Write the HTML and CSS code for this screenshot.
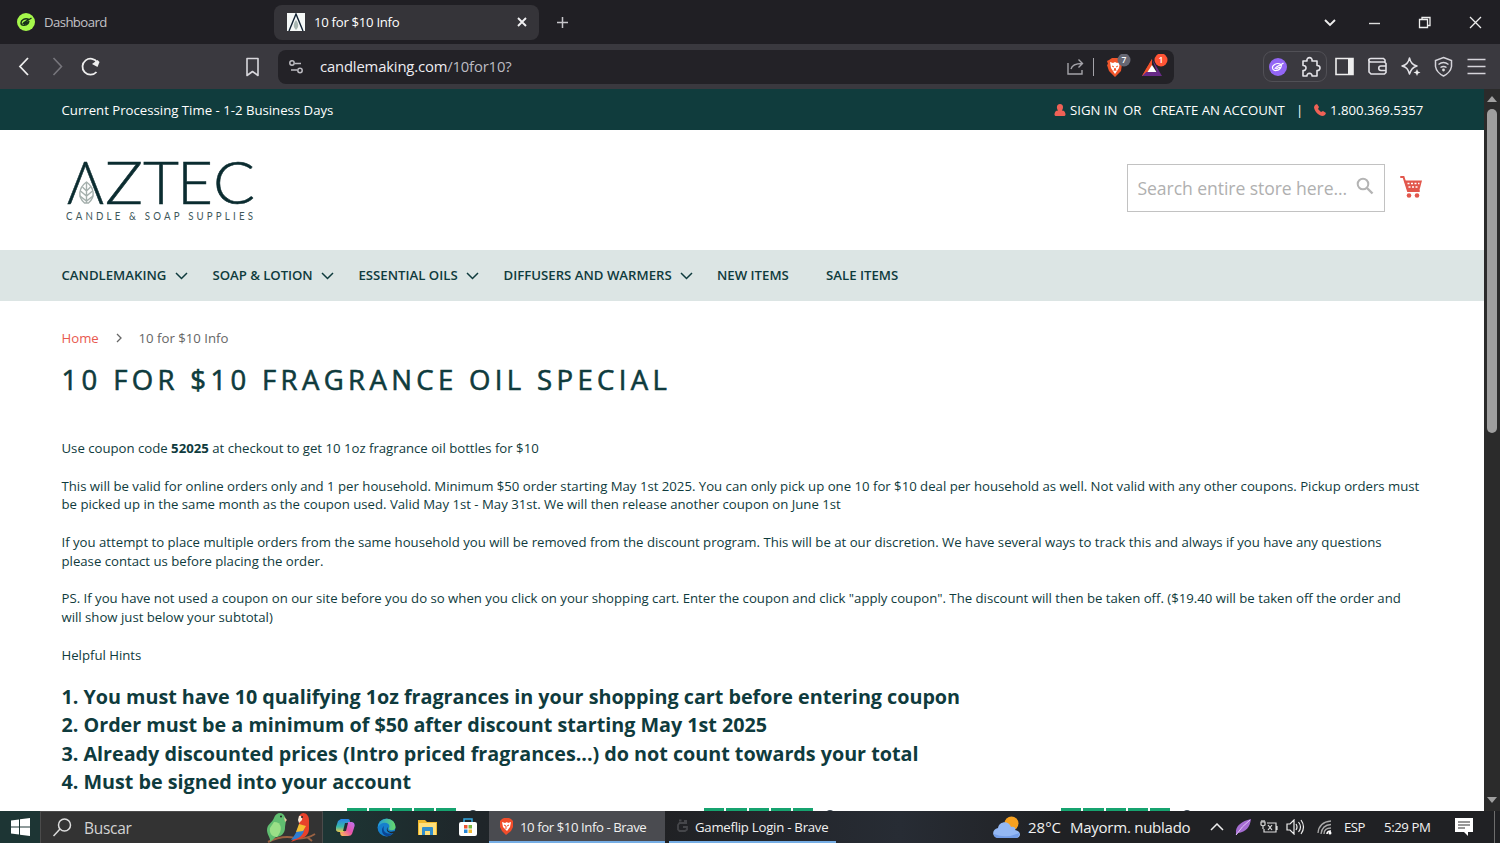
FILE: index.html
```html
<!DOCTYPE html>
<html lang="en">

<head>
  <meta charset="UTF-8" />
  <meta name="viewport" content="width=device-width, initial-scale=1.0" />
  <title>10 for $10 Info</title>
  <link rel="stylesheet" href="styles.css">
</head>

<body>

  <!-- browser tabs -->
  <div class="tabs">
    <div class="tab">
      <svg width="18" height="18" viewBox="0 0 18 18"><circle cx="9" cy="9" r="9" fill="#a5f84b"/><path d="M12 6.500C8 4.500 4 7 4 10c0 3 5 3 7 .5L12 8M6 11c0-2 4-3 8.500-6M7 11l4-2" fill="none" stroke="#18301a" stroke-width="1.500"/></svg>
      <span class="tab-off">Dashboard</span>
    </div>
    <div class="tab tab-active">
      <svg width="18" height="18" viewBox="0 0 18 18"><path d="M0 0h18v18H0z" fill="#f5f8f7"/><path d="M2 18 9 1l7 17" fill="none" stroke="#123" stroke-width="1.400"/><path d="M9 7c-3 4-3 7 0 10 3-3 3-6 0-10z" fill="#a9b7b3"/></svg>
      <span class="tab-on">10 for $10 Info</span>
      <svg class="tab-x" width="10" height="10" viewBox="0 0 10 10"><path d="m1 1 8 8m0-8L1 9" stroke="#f1f1f3" stroke-width="1.900"/></svg>
    </div>
    <svg class="new-tab" width="13" height="13" viewBox="0 0 13 13"><path d="M6.500 1v11M1 6.500h11" stroke="#c6c5ca" stroke-width="1.500"/></svg>
    <div class="window-buttons">
      <svg class="tab-search" width="50" height="24" viewBox="0 0 50 24"><path d="m20 10 5 5 5-5" fill="none" stroke="#eee" stroke-width="1.900"/></svg>
      <svg width="50" height="24" viewBox="0 0 50 24"><path d="M19 13.500h11" stroke="#ddd" stroke-width="1.400"/></svg>
      <svg width="50" height="24" viewBox="0 0 50 24"><path d="M19.500 9.500h8v8h-8zM22 9V7.500h8v8h-2" fill="none" stroke="#eee" stroke-width="1.300"/></svg>
      <svg width="50" height="24" viewBox="0 0 50 24"><path d="m20 7 11 11m0-11L20 18" stroke="#eee" stroke-width="1.300"/></svg>
    </div>
  </div>

  <!-- address bar -->
  <div class="toolbar">
    <svg class="tool" viewBox="0 0 33 33"><path d="m20 8-8 8.500 8 8.500" fill="none" stroke="#eee" stroke-width="1.800"/></svg>
    <svg class="tool" viewBox="0 0 33 33"><path d="m12.500 8 8 8.500-8 8.500" fill="none" stroke="#77767c" stroke-width="1.600"/></svg>
    <svg class="tool" viewBox="0 0 33 33"><path d="M22.500 22a8 8 0 1 1 .8-9.500" fill="none" stroke="#eee" stroke-width="1.800"/><path d="m18 14 5.500 3 2-5-2-2z" fill="#eee"/></svg>
    <svg class="tool bookmark" viewBox="0 0 33 33"><path d="M11 8.500h11v17l-5.500-4-5.500 4z" fill="none" stroke="#d8d7dc" stroke-width="1.600" stroke-linejoin="round"/></svg>
    <div class="address">
      <svg class="tune" width="16" height="16" viewBox="0 0 16 16"><g fill="none" stroke="#bcbbc1" stroke-width="1.500"><circle cx="4" cy="4" r="2.200"/><circle cx="12" cy="11.500" r="2.200"/><path d="M7 4.500h6M3 11h6"/></g></svg>
      <span class="url">candlemaking.com<i>/10for10?</i></span>
      <svg class="share" width="19" height="18" viewBox="0 0 19 18"><path d="M2 5v11h14v-4M5 11c1-4 4-5.500 11-5.500M12.500 1.500l4 4-4 4" fill="none" stroke="#a4a3a9" stroke-width="1.400"/></svg>
      <span class="divider"></span>
      <svg class="shield" width="26" height="26" viewBox="0 0 26 26"><path d="m4 6 3-2h6l3 3 1 3-1 7-6 6-6-6L2 11l1-1-1-3z" fill="#f1562b"/><path d="m5 8 3 1 2-1 2 1 3-1-1 6-4 6-4-6z" fill="#fff"/><path d="m7 12 2 1m4-1-2 1m-2 4 1-3 1 3" stroke="#f1562b" fill="none"/><circle cx="19" cy="6" r="6.500" fill="#666773"/><text class="badge" x="19" y="9" text-anchor="middle">7</text></svg>
      <svg width="27" height="26" viewBox="0 0 27 26"><path d="M10 5 0 22h10V14z" fill="#f0522c"/><path d="m10 5 10 17H0l4-4h11z" fill="#682a88"/><path d="M10 5v6l-6 7-4 4z" fill="#f0522c"/><path d="m10 11 4.500 7h-9z" fill="#fff"/><circle cx="19" cy="6" r="6.500" fill="#ff5435"/><text class="badge" x="19" y="9" text-anchor="middle">1</text></svg>
    </div>
    <div class="extensions">
      <svg width="20" height="20" viewBox="0 0 20 20"><circle cx="10" cy="10" r="9" fill="#9366f5"/><path d="M13 7.500C9 5 4 8 4.500 11c.5 4 7 3 8.500-1l.5-2M7 12c0-2 4-3 8.500-6M8 12l4-2" fill="none" stroke="#fff" stroke-width="1.200"/></svg>
      <svg width="22" height="22" viewBox="0 0 22 22"><path d="M4 5h4C7 .500 14 .500 13 5h5v4.500c4-.500 4 5.500 0 5V20h-5c.500-3.500-5.500-3.500-5 0H4v-5.500c4 .500 4-5.500 0-5z" fill="none" stroke="#e5e4e9" stroke-width="1.600" stroke-linejoin="round"/></svg>
    </div>
    <svg class="tool" viewBox="0 0 33 33"><path d="M8 8.500h17v16H8z" fill="none" stroke="#eee" stroke-width="1.600"/><path d="M20 8.500h5v16h-5z" fill="#eee"/></svg>
    <svg class="tool" viewBox="0 0 33 33"><path d="M24 12v-2l-1.500-1.500H10C7 8.500 7 12 10 12h13.500l1.500 1.500v9L23.500 24H10l-2-2V10M25 16h-5c-3 0-3 4.500 0 4.500h5" fill="none" stroke="#e2e1e6" stroke-width="1.600"/></svg>
    <svg class="tool" viewBox="0 0 33 33"><path d="M15.500 8c1 5 3 7 7.500 8-4 1-6 3-7.500 8-1.500-5-3-7-7.500-8 4.500-1 6.500-3 7.500-8z" fill="none" stroke="#e2e1e6" stroke-width="1.500" stroke-linejoin="round"/><path d="m23 19 1 2.500 2.500 1-2.500 1-1 2.500-1-2.500-2.500-1 2.500-1z" fill="#eee"/></svg>
    <svg class="tool" viewBox="0 0 33 33"><g fill="none" stroke="#d5d4da" stroke-width="1.500"><path d="m16.500 7.500 8 3v6q-1 6-8 9.500-7-3.500-8-9.500v-6z"/><path d="M11.500 14.500q5-4 10 0M13.500 17.500q3-2 6 0"/></g><circle cx="16.500" cy="20" r="1.400" fill="#ddd"/></svg>
    <svg class="tool" viewBox="0 0 33 33"><path d="M7.500 9.500h18M7.500 16.500h18M7.500 23.500h18" stroke="#d5d4da" stroke-width="1.600"/></svg>
  </div>

  <div class="viewport">
    <div class="page">

      <div class="topbar">
        <span class="processing">Current Processing Time - 1-2 Business Days</span>
        <svg class="user" width="12" height="12" viewBox="0 0 12 13"><path d="M6 0c4 0 4 5 2 7 3 0 4 2 4 5l-1 1H1l-1-1c0-3 1-5 4-5C2 5 2 0 6 0z" fill="#ef6156"/></svg>
        <span class="signin">SIGN IN</span>
        <span class="or">OR</span>
        <span class="create">CREATE AN ACCOUNT</span>
        <span class="bar">|</span>
        <svg class="phone" width="12" height="12" viewBox="0 0 12 12"><path d="M1 1 3 0l2 3-1 2 3 3 2-1 3 2-1 2-2 1C4 12 0 6 0 3z" fill="#ef6156"/></svg>
        <span class="number">1.800.369.5357</span>
      </div>

      <header class="header">
        <svg class="logo" width="190" height="86" viewBox="0 -14 190 86">
          <g class="logo-name">
            <text x="1" y="46" textLength="37" lengthAdjust="spacingAndGlyphs">Λ</text>
            <text x="39" y="46" textLength="38" lengthAdjust="spacingAndGlyphs">Z</text>
            <text x="77" y="46" textLength="36" lengthAdjust="spacingAndGlyphs">T</text>
            <text x="111" y="46" textLength="36" lengthAdjust="spacingAndGlyphs">E</text>
            <text x="147" y="46" textLength="42" lengthAdjust="spacingAndGlyphs">C</text>
          </g>
          <g fill="none" stroke="#a5b0ad" stroke-width="1.400"><path d="M20.500 24c-8 6-9 15-2 21h4c7-6 6-15-2-21z"/><path d="M20.500 25v20M16.500 29l4 4 4-4M14.500 33l6 5 6-5M14 38l6.500 5 6.500-5"/></g>
          <text class="logo-tag" x="0" y="62.500" textLength="228" transform="scale(.82 1)">CANDLE &amp; SOAP SUPPLIES</text>
        </svg>
        <div class="search">
          <span class="placeholder">Search entire store here...</span>
          <svg width="18" height="18" viewBox="0 0 18 18"><circle cx="7" cy="7" r="5.300" fill="none" stroke="#b4b4b4" stroke-width="2"/><path d="m11 11 5.500 5.500" stroke="#b4b4b4" stroke-width="2.400"/></svg>
        </div>
        <svg class="cart" width="22" height="24" viewBox="0 0 22 24"><path d="M1 2h2.500l4.500 14h11" fill="none" stroke="#e2574c" stroke-width="2" stroke-linecap="round"/><path d="M4 5.500h18L19.500 15H7.500z" fill="#e2574c"/><path d="M7.500 8.500h12M8.500 12h10" stroke="#fff" stroke-width="1.600" stroke-dasharray="2 1.500"/><circle cx="9" cy="20.500" r="2.300" fill="#e2574c"/><circle cx="17" cy="20.500" r="2.300" fill="#e2574c"/></svg>
      </header>

      <nav class="nav">
        <a class="nav-candle">CANDLEMAKING <svg viewBox="0 0 13 8"><path d="m1 1 5.500 5.500L12 1"/></svg></a>
        <a class="nav-soap">SOAP &amp; LOTION <svg viewBox="0 0 13 8"><path d="m1 1 5.500 5.500L12 1"/></svg></a>
        <a class="nav-oils">ESSENTIAL OILS <svg viewBox="0 0 13 8"><path d="m1 1 5.500 5.500L12 1"/></svg></a>
        <a class="nav-diffusers">DIFFUSERS AND WARMERS <svg viewBox="0 0 13 8"><path d="m1 1 5.500 5.500L12 1"/></svg></a>
        <a class="nav-new">NEW ITEMS</a>
        <a>SALE ITEMS</a>
      </nav>

      <main class="content">
        <div class="breadcrumbs">
          <a>Home</a>
          <svg width="6" height="10" viewBox="0 0 6 10"><path d="m1 1 4 4-4 4" fill="none" stroke="#666" stroke-width="1.300"/></svg>
          <span>10 for $10 Info</span>
        </div>
        <h1>10 FOR $10 FRAGRANCE OIL SPECIAL</h1>
        <p>Use coupon code <b>52025</b> at checkout to get 10 1oz fragrance oil bottles for $10</p>
        <p>This will be valid for online orders only and 1 per household. Minimum $50 order starting May 1st 2025. You can only pick up one 10 for $10 deal per household as well. Not valid with any other coupons. Pickup orders must<br>be picked up in the same month as the coupon used. Valid May 1st - May 31st. We will then release another coupon on June 1st</p>
        <p>If you attempt to place multiple orders from the same household you will be removed from the discount program. This will be at our discretion. We have several ways to track this and always if you have any questions<br>please contact us before placing the order.</p>
        <p>PS. If you have not used a coupon on our site before you do so when you click on your shopping cart. Enter the coupon and click "apply coupon". The discount will then be taken off. ($19.40 will be taken off the order and<br>will show just below your subtotal)</p>
        <p>Helpful Hints</p>
        <div class="hints">
          <div>1. You must have 10 qualifying 1oz fragrances in your shopping cart before entering coupon</div>
          <div>2. Order must be a minimum of $50 after discount starting May 1st 2025</div>
          <div>3. Already discounted prices (Intro priced fragrances...) do not count towards your total</div>
          <div>4. Must be signed into your account</div>
        </div>
        <div class="ratings">
          <div class="stars"><i></i><i></i><i></i><i></i><i></i><b></b></div>
          <div class="stars"><i></i><i></i><i></i><i></i><i></i><b></b></div>
          <div class="stars"><i></i><i></i><i></i><i></i><i></i><b></b></div>
        </div>
      </main>
    </div>

    <div class="scrollbar">
      <svg width="10" height="6" viewBox="0 0 10 6"><path d="m5 0 5 6H0z" fill="#a0a0a0"/></svg>
      <div class="thumb"></div>
      <svg class="down" width="10" height="6" viewBox="0 0 10 6"><path d="M0 0h10L5 6z" fill="#a0a0a0"/></svg>
    </div>
  </div>

  <!-- windows taskbar -->
  <div class="taskbar">
    <div class="start"><svg width="19" height="18" viewBox="0 0 19 18"><path d="m0 2.500 8-1v7H0zM9 1.300 19 0v8.500H9zM0 9.500h8v7l-8-1zM9 9.500h10V18L9 16.700z" fill="#fff"/></svg></div>
    <div class="find">
      <svg width="19" height="19" viewBox="0 0 19 19"><circle cx="11.500" cy="7" r="6" fill="none" stroke="#ddd" stroke-width="1.500"/><path d="m7 11-6.500 7" stroke="#ddd" stroke-width="1.500"/></svg>
      <span>Buscar</span>
      <svg class="parrots" width="52" height="31" viewBox="0 0 52 31"><path d="M3 30q14-7 27-4 10 2 20-4M42 25l5 4" fill="none" stroke="#9b6243" stroke-width="2"/><path d="M9 6c2-6 9-7 11-1 2 3 0 7 0 11 0 5-4 9-9 9l-6 5c1-4-3-7-3-12C2 12 7 11 9 6z" fill="#60bd70"/><path d="M9 10c8 0 9 8 3 15-5 0-8-4-7-9z" fill="#9adf87"/><path d="m19 5 3 3-2 2z" fill="#e5c6a0"/><circle cx="16" cy="4.500" r="1" fill="#222"/><path d="M34 5c2-7 10-4 10 3v9c0 6-5 9-10 10l-8 3c4-4 5-9 8-14z" fill="#e8412a"/><path d="M34 13c-2 6-4 10-8 15 8-1 13-5 13-11z" fill="#2f7cd0"/><path d="m34 12-3 8 7-1 3-5z" fill="#f4be31"/><path d="M34 4q4-1 3 4l-3 3-1-3z" fill="#f8e8d7"/><circle cx="37" cy="5" r="1" fill="#222"/></svg>
    </div>
    <div class="pinned">
      <svg width="19" height="18" viewBox="0 0 19 18"><defs><linearGradient id="cop" x1="0" y1="1" x2="1" y2="0"><stop stop-color="#ffc64b"/><stop offset=".5" stop-color="#e852aa"/><stop offset="1" stop-color="#ba75f5"/></linearGradient><linearGradient id="cop2" x2="0" y2="1"><stop stop-color="#2882ea"/><stop offset=".6" stop-color="#39bba8"/><stop offset="1" stop-color="#f1c94c"/></linearGradient></defs><path d="M5 1h7q2 0 2 3l-3 1-3 9H3q-4 0-3-5l2-6z" fill="url(#cop2)"/><path d="M12 4h4q4 1 2 6l-2 6q-1 2-4 2H6q-2-1-2-4h4z" fill="url(#cop)"/><path d="M9 5h3l-2 8H7z" fill="#203033"/></svg>
      <svg width="19" height="19" viewBox="0 0 19 19"><defs><linearGradient id="edge"><stop stop-color="#229bdc"/><stop offset="1" stop-color="#68da68"/></linearGradient></defs><circle cx="9.500" cy="9.500" r="9" fill="#167fcd"/><path d="M1 9C2-2 18-2 18.500 9c0 4-5 4-7 2 4-7-7-9-10.500-2z" fill="url(#edge)"/><path d="M7 8c-2 6 3 9 9 7-3 5-11 4-11-3 0-2 1-3 2-4z" fill="#0b4594"/><path d="M11 9c-2 4 2 6 7 4l-1 2c-6 1-9-3-6-6z" fill="#20272c"/></svg>
      <svg width="19" height="17" viewBox="0 0 19 17"><path d="M0 1h7l2 2h10v13H0z" fill="#f0b92d"/><path d="M1 4h17v12H1z" fill="#ffe07b"/><path d="M4 16V9q0-1 1-1h9q1 0 1 1v7h-3v-4H7v4z" fill="#318ecc"/></svg>
      <svg width="18" height="18" viewBox="0 0 18 18"><path d="M5 5V1h8v4" fill="none" stroke="#35a9e2" stroke-width="1.500"/><rect x="0" y="4" width="18" height="14" rx="2" fill="#fff"/><path d="M5 7h3.500v3.500H5z" fill="#ee5532"/><path d="M9.500 7H13v3.500H9.500z" fill="#78b840"/><path d="M5 11.500h3.500V15H5z" fill="#2686d8"/><path d="M9.500 11.500H13V15H9.500z" fill="#f2b82f"/></svg>
    </div>
    <div class="task task-active">
      <svg width="15" height="17" viewBox="0 0 15 17"><path d="m3 1 2-1h5l2 1 2 2v6l-2 4-5 4-4-4-2-4V3z" fill="#f14d2b"/><path d="m3 4 3 1 2-1 1 1 3-1-1 5-3 4-4-4z" fill="#fff"/><path d="m5 7 2 1m3-1L8 8m-1 3V8" stroke="#f14d2b" fill="none"/></svg>
      <span class="task-info">10 for $10 Info - Brave</span>
    </div>
    <div class="task task-login">
      <svg width="13" height="14" viewBox="0 0 13 14"><path d="M11 4H3.500L2 6v4.500L3.500 12H9l2-1.500V8H7M3 1.500h2.500M8 2h3" fill="none" stroke="#45464a" stroke-width="1.800"/></svg>
      <span class="task-game">Gameflip Login - Brave</span>
    </div>
    <div class="tray">
      <svg class="weather" width="27" height="23" viewBox="0 0 27 23"><circle cx="18.500" cy="7.500" r="7" fill="#f7a120"/><path d="M5 22C-2 21-1 13 5 12c1-7 11-8 13-1 4-1 5 2 4 3 7 1 6 8 1 8z" fill="#94b8f4"/><path d="M1 18q12 5 25-1 0 5-4 5H5q-4 0-4-4z" fill="#749ee8"/></svg>
      <span class="temp">28°C</span>
      <span class="forecast">Mayorm. nublado</span>
      <svg class="chevron" width="14" height="8" viewBox="0 0 14 8"><path d="m1 7 6-6 6 6" fill="none" stroke="#eee" stroke-width="1.500"/></svg>
      <svg class="feather" width="17" height="18" viewBox="0 0 17 18"><path d="M1 15C0 8 7 3 16 1c-1 8-5 13-13 14l-2 2z" fill="#a66dd2"/><path d="M1 17Q7 8 15 2" fill="none" stroke="#e1c4f5"/></svg>
      <svg class="battery" width="18" height="14" viewBox="0 0 18 14"><path d="M1 2v3l2 1 2-1V2zM2 0v2M4 0v2M3 6v3M7 3h9v9H4V9M17 6v4" fill="none" stroke="#ddd" stroke-width="1.200"/><path d="m8 5 4 5m0-5-4 5" stroke="#ddd" stroke-width="1.200"/></svg>
      <svg class="volume" width="19" height="16" viewBox="0 0 19 16"><path d="M1 5h3l4-4v14l-4-4H1zM10 5q2 3 0 6M12.500 3q4 5 0 10M15 1q5 7 0 14" fill="none" stroke="#eee" stroke-width="1.200"/></svg>
      <svg class="wifi" width="15" height="15" viewBox="0 0 15 15"><path d="M1 13Q2 2 14 1M4 14Q5 5 14 4.500M7 14q0-6 7-6" fill="none" stroke="#aaa" stroke-width="1.300"/><path d="M10 14q0-3 4-3" fill="none" stroke="#fff" stroke-width="1.600"/><circle cx="13" cy="13" r="1.500" fill="#fff"/></svg>
      <span class="lang">ESP</span>
      <span class="clock">5:29 PM</span>
      <svg class="notice" width="18" height="18" viewBox="0 0 18 18"><path d="M0 0h18v14h-5v4l-4-4H0z" fill="#fff"/><path d="M3 4h12M3 7h12M3 10h7" stroke="#333" stroke-width="1.200"/></svg>
      <span class="desktop"></span>
    </div>
  </div>

</body>
</html>
```

FILE: styles.css
```css
* {
  box-sizing: border-box;
}

body {
  margin: 0;
  width: 1500px;
  height: 843px;
  overflow: hidden;
  display: flex;
  flex-direction: column;
  font-family: "Open Sans", sans-serif;
  font-size: 13.2px;
  color: #0f3b3d;
  background: #fff;
}

svg {
  display: block;
  flex: none;
}

span, a {
  white-space: nowrap;
  flex: none;
}

/* tabs */

.tabs {
  height: 44px;
  flex: none;
  display: flex;
  align-items: center;
  background: #201f24;
  color: #fff;
}

.tab {
  display: flex;
  align-items: center;
  width: 265px;
  height: 35px;
  padding-left: 17px;
  gap: 9px;
  color: #c3c2c7;
  letter-spacing: -0.3px;
}

.tab-off {
  letter-spacing: -0.6px;
}

.tab-active {
  margin-left: 9px;
  padding: 0 12px 0 13px;
  border-radius: 8px;
  background: #353439;
  color: #fff;
}

.tab-x {
  margin-left: auto;
}

.new-tab {
  margin-left: 17px;
}

.window-buttons {
  display: flex;
  margin-left: auto;
}

.tab-search {
  margin-right: -5px;
}

/* toolbar */

.toolbar {
  height: 45px;
  flex: none;
  display: flex;
  align-items: center;
  padding-left: 8px;
  background: #3a393f;
}

.tool {
  width: 33px;
  height: 33px;
}

.bookmark {
  margin-left: 129px;
}

.address {
  display: flex;
  align-items: center;
  width: 896px;
  height: 34px;
  margin-left: 9px;
  padding-left: 10px;
  border-radius: 8px;
  background: #232227;
  color: #eeedf2;
}

.url {
  width: 730px;
  margin-left: 16px;
  padding-bottom: 2px;
  font-size: 14.8px;
  letter-spacing: -0.15px;
}

.url i {
  font-style: normal;
  color: #bdbcc3;
}

.share {
  margin-left: 16px;
}

.divider {
  width: 1px;
  height: 18px;
  margin: 0 11px 0 8px;
  background: #a4a3a9;
}

.shield {
  margin-right: 11px;
}

.badge {
  font-size: 8.5px;
  font-weight: 600;
  fill: #fff;
}

.extensions {
  display: flex;
  align-items: center;
  justify-content: space-between;
  width: 64px;
  height: 31px;
  margin-left: 89px;
  padding: 0 5px 0 4px;
  border: 1px solid #515056;
  border-radius: 9px;
}

.extensions + .tool {
  margin-left: 1px;
}

/* store page */

.viewport {
  height: 722px;
  flex: none;
  display: flex;
}

.page {
  width: 1484px;
  height: 722px;
  overflow: hidden;
  background: #fff;
}

.topbar {
  display: flex;
  align-items: center;
  height: 41px;
  padding-left: 61.5px;
  background: #103c3d;
  color: #fff;
}

.processing {
  width: 992.5px;
}

.signin {
  width: 53px;
  margin-left: 4px;
}

.or {
  width: 29px;
}

.create {
  width: 144px;
  letter-spacing: -0.06px;
}

.bar {
  width: 18px;
}

.number {
  margin-left: 4px;
}

.header {
  display: flex;
  align-items: center;
  height: 120px;
  padding-left: 66px;
}

.logo {
  margin-top: -7px;
}

.logo-name {
  font-family: Lato, sans-serif;
  font-weight: 300;
  font-size: 59px;
  fill: #0b2c30;
  stroke: #0b2c30;
  stroke-width: 0.5;
}

.logo-tag {
  font-family: Lato, sans-serif;
  font-size: 11.8px;
  fill: #40575a;
}

.search {
  display: flex;
  align-items: center;
  width: 258px;
  height: 48px;
  margin: -4px 0 0 871px;
  padding-left: 9.5px;
  border: 1px solid #c2c2c2;
}

.search svg {
  margin: -4px 0 0 -1px;
}

.placeholder {
  width: 219px;
  font-size: 17.6px;
  letter-spacing: -0.08px;
  color: #b0b0b0;
}

.cart {
  margin: -6px 0 0 15px;
}

.nav {
  display: flex;
  align-items: center;
  height: 51px;
  padding: 0 0 2px 61.5px;
  background: #dce5e4;
  font-weight: 600;
}

.nav a {
  display: flex;
  align-items: center;
  justify-content: space-between;
}

.nav svg {
  width: 13px;
  height: 8px;
  margin-top: 2px;
  fill: none;
  stroke: #0f3b3d;
  stroke-width: 1.5;
}

.nav-candle {
  width: 126.5px;
  margin-right: 24.5px;
}

.nav-soap {
  width: 121.5px;
  margin-right: 24.5px;
  letter-spacing: -0.05px;
}

.nav-oils {
  width: 120.5px;
  margin-right: 24.5px;
}

.nav-diffusers {
  width: 189.5px;
  margin-right: 24px;
}

.nav-new {
  width: 109px;
}

.content {
  padding: 27px 0 0 61.5px;
}

.breadcrumbs {
  display: flex;
  align-items: center;
  height: 20px;
  color: #666;
}

.breadcrumbs a {
  width: 54px;
  color: #e8594f;
}

.breadcrumbs svg {
  margin-right: 17px;
}

h1 {
  margin: 12px 0 39px;
  font-size: 27.5px;
  font-weight: 400;
  line-height: 40px;
  letter-spacing: 4.36px;
  white-space: nowrap;
  -webkit-text-stroke: 0.6px #0f3b3d;
}

p {
  margin: 0 0 18.7px;
  line-height: 18.85px;
  letter-spacing: -0.008px;
  white-space: nowrap;
}

.hints {
  font-size: 19.75px;
  font-weight: 700;
  line-height: 28.2px;
  letter-spacing: -0.02px;
  white-space: nowrap;
}

.ratings {
  display: flex;
  margin: 12px 0 0 285.5px;
}

.stars {
  display: flex;
  gap: 2px;
  width: 357px;
  height: 4px;
}

.stars i {
  width: 20.3px;
  height: 20px;
  background: #16a36f;
}

.stars b {
  width: 10px;
  height: 10px;
  margin: 2px 0 0 10px;
  border-radius: 5px;
  background: #3b4650;
}

.scrollbar {
  display: flex;
  flex-direction: column;
  align-items: center;
  width: 16px;
  padding: 7px 0 8px;
  background: #2b2b2b;
}

.thumb {
  width: 10px;
  height: 324px;
  margin-top: 7px;
  border-radius: 5px;
  background: #9f9f9f;
}

.down {
  margin-top: auto;
}

/* taskbar */

.taskbar {
  display: flex;
  height: 32px;
  flex: none;
  background: linear-gradient(90deg, #1d3534 0, #1d3534 330px, #1f2529 480px, #202124 660px, #272c34 900px, #202124 1060px);
  color: #f1f1f1;
}

.start {
  display: flex;
  align-items: center;
  width: 40px;
  padding-left: 11px;
}

.find {
  display: flex;
  align-items: center;
  width: 283px;
  padding-left: 12px;
  border: 1px solid #4b4b4b;
  border-bottom: 0;
  background: #333;
  font-size: 15.5px;
  letter-spacing: -0.3px;
  color: #d3d3d3;
}

.find span {
  width: 181px;
  margin-left: 12px;
}

.pinned {
  display: flex;
  align-items: center;
  gap: 22px;
  width: 166px;
  padding-left: 13px;
}

.task {
  display: flex;
  align-items: center;
  height: 32px;
  border-bottom: 2px solid #76aee5;
}

.task span {
  padding-top: 2px;
}

.task-active {
  width: 176px;
  gap: 6px;
  padding-left: 10px;
  background: #4a4b50;
  letter-spacing: -0.43px;
}

.task-login {
  width: 167px;
  margin-left: 4px;
  padding-left: 7px;
  gap: 6px;
  letter-spacing: -0.25px;
}

.tray {
  display: flex;
  align-items: center;
  width: 664px;
  padding-left: 157px;
}

.temp {
  width: 42px;
  margin-left: 8px;
  font-size: 15px;
}

.forecast {
  width: 140px;
  font-size: 15px;
  letter-spacing: -0.25px;
}

.feather {
  margin-left: 11px;
}

.battery {
  margin-left: 8px;
}

.volume {
  margin-left: 8px;
}

.wifi {
  margin-left: 12px;
}

.lang {
  width: 40px;
  margin-left: 12px;
  letter-spacing: -0.5px;
}

.clock {
  width: 71px;
  letter-spacing: -0.4px;
}

.desktop {
  width: 1px;
  height: 32px;
  margin-left: 21px;
  background: #6d6d6d;
}
```
